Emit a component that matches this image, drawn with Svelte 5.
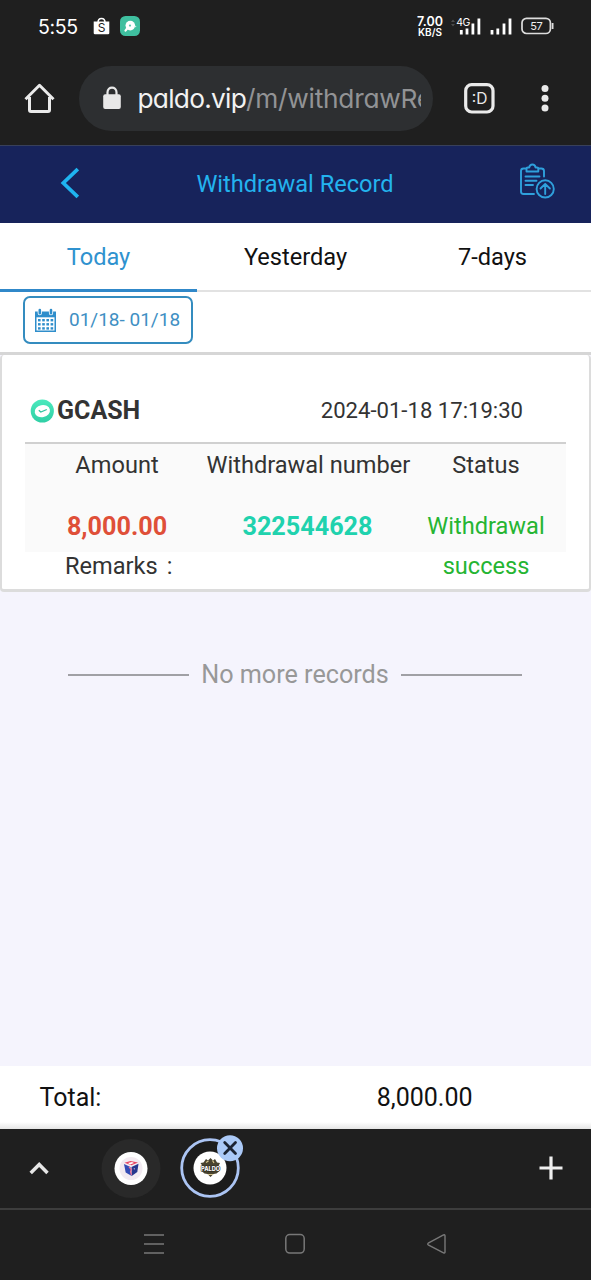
<script>
  const tabs = ['Today', 'Yesterday', '7-days'];
  let active = $state(0);
  const calendarDots = [0, 1, 2, 3].flatMap((c) => [0, 1, 2].map((r) => ({ x: 4 + c * 4.2, y: 11 + r * 4.1 })));
</script>

<div class="screen">
  <div class="status">
    <span class="time">5:55</span>
    <svg class="shop" width="17" height="19" viewBox="0 0 17 19">
      <path d="M5 5.500C5 0 12 0 12 5.500" fill="none" stroke="#fff" stroke-width="1.500" />
      <path d="M.7 4.500h15.600V16q0 1.300-1.300 1.300H2Q.7 17.300.7 16z" fill="#fff" />
      <text x="8.500" y="15.400" text-anchor="middle" font-family="Inter, sans-serif" font-size="12" fill="#222">S</text>
    </svg>
    <svg class="app" width="20" height="20" viewBox="0 0 20 20">
      <rect width="20" height="20" rx="5.500" fill="#3fbf9f" />
      <circle cx="10.300" cy="9.600" r="4.800" fill="#fff" />
      <path d="M7.500 12l-2 2.600" stroke="#fff" stroke-width="2.200" stroke-linecap="round" />
      <circle cx="10" cy="9.600" r="1.100" fill="#5cc8ad" />
      <circle cx="15.500" cy="10.500" r=".8" fill="#c4efe3" />
    </svg>
    <div class="speed"><b>7.00</b><b class="unit">KB/S</b></div>
    <svg class="signals" width="63" height="20" viewBox="0 0 63 20">
      <path d="M1 6l2-2.500L5 6zM1 8l2 2.500L5 8z" fill="#4d4d4d" />
      <text x="6.300" y="9.800" font-family="Inter, sans-serif" font-size="10.500" letter-spacing="-.6" fill="#fff">4G</text>
      <g stroke="#fff" stroke-width="2.800">
        <path d="M11.300 18.500v-4.500M17 18.500v-6M22.900 18.500V7.500M28.900 18.500V2.500" />
        <path d="M42 18.500v-4.500M47.800 18.500v-6M54 18.500V7.500M60 18.500V2.500" />
      </g>
    </svg>
    <svg class="battery" width="33" height="18" viewBox="0 0 33 18">
      <rect x="1" y="1.300" width="28.400" height="15.200" rx="4.500" fill="none" stroke="#ddd" stroke-width="1.700" />
      <path d="M31.600 6v6" stroke="#ddd" stroke-width="1.800" />
      <text x="15.200" y="12.900" text-anchor="middle" font-family="Inter, sans-serif" font-size="11" letter-spacing="-.4" fill="#eee">57</text>
    </svg>
  </div>

  <div class="browser">
    <svg class="home" width="32" height="32" viewBox="0 0 32 32">
      <path d="M1.500 17.300L15.500 3.300l14 14M5.500 15v13q0 1.500 1.500 1.500h17q1.500 0 1.500-1.500V15" fill="none" stroke="#eaeaea" stroke-width="3" stroke-linejoin="round" />
    </svg>
    <div class="url">
      <svg width="18" height="24" viewBox="0 0 18 24">
        <path d="M4.500 9V6.200c0-6.200 9-6.200 9 0V9" fill="none" stroke="#e8e8e8" stroke-width="2.200" />
        <rect x=".2" y="8.300" width="17.600" height="14.700" rx="2" fill="#e8e8e8" />
      </svg>
      <div class="address">paldo.vip<span>/m/withdrawRe</span></div>
    </div>
    <svg class="count" width="31" height="31" viewBox="0 0 31 31">
      <rect x="1.700" y="1.700" width="27.300" height="27.300" rx="6" fill="none" stroke="#eaeaea" stroke-width="3.200" />
      <text x="15.500" y="20.600" text-anchor="middle" font-family="Inter, sans-serif" font-size="15.500" fill="#eaeaea">:D</text>
    </svg>
    <svg class="dots" width="8" height="28" viewBox="0 0 8 28">
      <g fill="#eaeaea"><circle cx="4" cy="4.400" r="3.500" /><circle cx="4" cy="14.200" r="3.500" /><circle cx="4" cy="24" r="3.500" /></g>
    </svg>
  </div>

  <header>
    <svg class="back" width="20" height="32" viewBox="0 0 20 32">
      <path d="M18.800 2L4.300 16l14.500 14" fill="none" stroke="#1fb4f0" stroke-width="3.700" />
    </svg>
    <h1>Withdrawal Record</h1>
    <svg class="board" width="36" height="36" viewBox="0 0 36 36" fill="none" stroke="#2fa0dc" stroke-width="1.900" stroke-linecap="round" stroke-linejoin="round">
      <path d="M7.300 5.500H4.500Q2 5.500 2 8v20.500Q2 31 4.500 31H15M19.500 5.500h2.700Q25 5.500 25 8v5.500" />
      <path d="M7.500 8.500V5.700q0-1.200 1.300-1.200h1.400q.6-3 3.200-3t3.200 3H18q1.300 0 1.300 1.200v2.800z" />
      <path d="M6.500 13.500h14M6.500 17.700h11M6.500 22h7.500" />
      <circle cx="26.200" cy="25.900" r="8.600" />
      <path d="M26.200 31V21M21.500 25.500l4.700-4.700 4.700 4.700" />
    </svg>
  </header>

  <nav class="tabs">
    {#each tabs as tab, i}
      <button class:active={active === i} onclick={() => (active = i)}>{tab}</button>
    {/each}
  </nav>

  <div class="filter">
    <div class="range">
      <svg width="23" height="25" viewBox="0 0 23 25">
        <path d="M1 3.500h21V24H1z" fill="#2f8ecb" />
        <path d="M2.500 9.300h18v13.200h-18z" fill="#fff" />
        <path d="M5.800 2v3.200M17 2v3.200" stroke="#fff" stroke-width="4.200" stroke-linecap="round" />
        <path d="M5.800 2v3.200M17 2v3.200" stroke="#2f8ecb" stroke-width="2.600" stroke-linecap="round" />
        {#each calendarDots as d}
          <rect x={d.x} y={d.y} width="2.600" height="2.400" fill="#2f8ecb" />
        {/each}
      </svg>
      <span>01/18- 01/18</span>
    </div>
  </div>

  <section class="card">
    <div class="top">
      <svg width="24" height="24" viewBox="0 0 24 24">
        <defs><linearGradient id="mint" x2="0" y2="1"><stop stop-color="#4be9bd" /><stop offset="1" stop-color="#2fcfa5" /></linearGradient></defs>
        <circle cx="12.300" cy="12" r="11.600" fill="url(#mint)" />
        <ellipse cx="12.300" cy="12.200" rx="7.700" ry="6" fill="#fff" transform="rotate(-12 12 12)" />
        <path d="M8.800 11.300l2 1.700 6-2.500" fill="none" stroke="#2fc49e" stroke-width="1.300" />
      </svg>
      <strong>GCASH</strong>
      <time>2024-01-18 17:19:30</time>
    </div>
    <div class="grid">
      <div class="label">Amount</div>
      <div class="label wide">Withdrawal number</div>
      <div class="label">Status</div>
      <div class="amount">8,000.00</div>
      <div class="number">322544628</div>
      <div class="state">Withdrawal success</div>
    </div>
    <div class="remarks">Remarks<i>:</i></div>
  </section>

  <main>
    <div class="end">No more records</div>
  </main>

  <div class="total"><span>Total:</span><span class="sum">8,000.00</span></div>

  <div class="strip">
    <svg class="up" width="20" height="14" viewBox="0 0 20 14"><path d="M1.700 12L10.200 3.500l8.300 8.500" fill="none" stroke="#e6e6e6" stroke-width="3.500" /></svg>
    <svg class="site" width="60" height="60" viewBox="0 0 60 60">
      <circle cx="30" cy="29.500" r="29.500" fill="#292929" />
      <circle cx="30" cy="29.500" r="16.500" fill="#fff" />
      <circle cx="30" cy="29.500" r="11.500" fill="#f2eaf1" />
      <path d="M23 25l6.500 3 1.200 9-6-3.500z" fill="#344bb5" />
      <path d="M30.500 28l7-3.300-1.200 8.300-5.600 4z" fill="#25378f" />
      <path d="M23.500 23.800l6-1.800 7.500 1.400-6.500 2.900z" fill="#e64463" />
      <path d="M27 24l4-1 2 1-4 1.500z" fill="#fff" />
      <path d="M28 28l2.500 2.500-1 2 1 3.500" fill="none" stroke="#ef7291" stroke-width="1.200" />
      <path d="M32.500 29.800l1.500-.8-.6 1.800z" fill="#fbd1df" />
    </svg>
    <svg class="site current" width="66" height="64" viewBox="0 0 66 64">
      <circle cx="30" cy="34" r="28.300" fill="#1c1c1c" stroke="#abc4f3" stroke-width="2.800" />
      <circle cx="30" cy="34" r="16.500" fill="#fff" />
      <path d="M20.500 29l3-.5 2.500-3.500 2 1.500 2.500-2.500 2.500 2.500 2-1.500 2 3.500 3 .5-1.500 3 1.500 4.500-3.500 3-3 .5-3 3-3-3-3-.5-3.500-3 1.500-4.500z" fill="#49432f" />
      <path d="M26 28.500l2.500-1.500M32.500 26.500l1.500 2.500M28 40.500h5" stroke="#d7c58c" stroke-width="1.200" />
      <text x="30.500" y="37" text-anchor="middle" font-family="Inter, sans-serif" font-size="5.600" font-weight="800" fill="#fff" stroke="#26241c" stroke-width=".9" paint-order="stroke">PALDO</text>
      <circle cx="50" cy="14.300" r="13" fill="#abc9f7" />
      <path d="M44.700 8.600l10.800 10.800M55.500 8.600L44.700 19.400" stroke="#1c2333" stroke-width="2.800" stroke-linecap="round" />
    </svg>
    <svg class="plus" width="24" height="24" viewBox="0 0 24 24"><path d="M12 .5v23M.5 12h23" stroke="#efefef" stroke-width="3.200" /></svg>
  </div>

  <div class="system">
    <svg width="22" height="22" viewBox="0 0 22 22"><path d="M1 2h20M1 11h20M1 20h20" stroke="#787878" stroke-width="1.500" /></svg>
    <svg width="22" height="22" viewBox="0 0 22 22"><rect x="1.800" y="1.500" width="18.400" height="18.600" rx="4" fill="none" stroke="#787878" stroke-width="1.500" /></svg>
    <svg width="22" height="22" viewBox="0 0 22 22"><path d="M3.200 10.200L18.500 2q1.500-.7 1.500 1v16q0 1.500-1.500.8L3.200 11.800q-1-.8 0-1.600z" fill="none" stroke="#787878" stroke-width="1.400" /></svg>
  </div>
</div>

<style>
  :global(body) { margin: 0; }
  svg { display: block; flex: none; }
  .screen {
    width: 591px; height: 1280px; display: flex; flex-direction: column; overflow: hidden;
    background: #f5f4fd; font-family: Roboto, sans-serif; font-size: 23.6px; color: #333;
  }
  .screen > * { box-sizing: border-box; flex: none; }
  .status { height: 53px; background: #1f1f1f; display: flex; align-items: center; padding-left: 38px; color: #fff; }
  .time { font: 400 19.5px/20px Inter, sans-serif; width: 55px; letter-spacing: -.4px; }
  .app { margin-left: 10px; margin-top: -1px; }
  .speed { margin-left: 276px; width: 28px; display: flex; flex-direction: column; align-items: center; font-family: Inter, sans-serif; }
  .speed b { font-weight: 600; font-size: 12.5px; line-height: 11px; }
  .speed .unit { font-size: 10px; line-height: 11px; }
  .signals { margin-left: 6px; margin-top: -2px; }
  .battery { margin-left: 8px; margin-top: -1px; }
  .browser { height: 93px; background: #1f1f1f; border-bottom: 1px solid #38405a; display: flex; align-items: center; padding: 0 0 2px 24px; }
  .url { width: 354px; height: 65px; border-radius: 33px; background: #2d2f31; margin-left: 23px; display: flex; align-items: center; padding: 0 12px 0 24px; box-sizing: border-box; }
  .address { margin-left: 16.500px; margin-top: 2px; width: 283px; overflow: hidden; white-space: nowrap; font: 400 26.300px/36px Inter, sans-serif; letter-spacing: -.75px; font-feature-settings: "cv11"; color: #f2f2f2; }
  .address span { color: #929395; letter-spacing: -.25px; }
  .count { margin-left: 31px; }
  .dots { margin-left: 46px; }
  header { height: 77px; background: #17235b; display: flex; align-items: center; padding: 0 36px 2px 59px; }
  .back { margin-top: -2px; }
  h1 { flex: 1; margin: 0; text-align: center; font-size: 23.600px; line-height: 30px; font-weight: 400; color: #23b3ee; padding-right: 8px; }
  header .board { margin-top: -6px; }
  .tabs { height: 69px; background: #fff; display: grid; grid-template-columns: repeat(3, 1fr); border-bottom: 2px solid #e2e2e2; }
  .tabs button { border: 0; background: none; padding: 0; margin-bottom: -2px; font: 400 23.600px/68px Roboto, sans-serif; height: 69px; color: #111; border-bottom: 3px solid transparent; }
  .tabs button.active { color: #2f92cf; border-bottom-color: #3088c9; }
  .filter { height: 63px; background: #fff; padding: 4px 0 0 23px; border-bottom: 3px solid #d6d6d6; }
  .range { width: 170px; height: 48px; box-sizing: border-box; border: 2px solid #348cbf; border-radius: 7px; display: flex; align-items: center; padding-left: 9px; color: #408fc3; font-size: 19px; }
  .range span { margin-left: 12px; line-height: 24px; white-space: nowrap; margin-top: -1px; }
  .card { height: 237px; background: #fff; border: solid #dcdcdc; border-width: 0 2px 3px; border-radius: 4px; padding: 31px 23px 0; }
  .top { height: 58px; border-bottom: 2px solid #d0d0d0; box-sizing: border-box; display: flex; align-items: center; padding: 0 43px 6px 5px; }
  .top strong { font-size: 25px; line-height: 30px; margin-left: 3px; }
  .top time { margin-left: auto; font-size: 22.100px; margin-top: -2px; }
  .grid { height: 108px; background: #fafafa; display: grid; grid-template-columns: 184px 197px 160px; grid-template-rows: 62px 40px; text-align: center; line-height: 40px; }
  .label { line-height: 43px; white-space: nowrap; }
  .wide { margin-left: -2.500px; }
  .amount, .number { font-weight: 700; font-size: 25.200px; line-height: 41px; }
  .amount { color: #df4f38; }
  .number { color: #20d2ae; }
  .state { color: #25b532; }
  .remarks { padding-left: 40px; line-height: 28px; }
  .remarks i { font-style: normal; margin-left: 9px; }
  main { flex: 1 1 0 !important; min-height: 0; padding: 66px 69px 0 68px; }
  .end { display: flex; align-items: center; gap: 12px; font-size: 25.200px; line-height: 34px; color: #989898; white-space: nowrap; }
  .end::before, .end::after { content: ""; flex: 1; height: 2px; background: #a0a0a5; }
  .total { height: 63px; background: linear-gradient(#fff 0 56px, #e5e5e5); display: flex; padding-left: 39.500px; font-size: 25px; line-height: 63px; color: #111; }
  .total .sum { margin-left: auto; margin-right: 118.500px; }
  .strip { height: 79px; background: #1f1f1f; display: flex; align-items: center; padding-left: 29px; }
  .up { margin-top: -2px; }
  .site { margin-left: 52px; }
  .site.current { margin-left: 19px; margin-top: -5px; }
  .plus { margin-left: 293px; margin-top: -1px; }
  .system { height: 72px; background: #1f1f1f; border-top: 2px solid #3d3d3d; display: flex; align-items: center; padding: 0 0 2px 143px; gap: 119px; }
</style>
